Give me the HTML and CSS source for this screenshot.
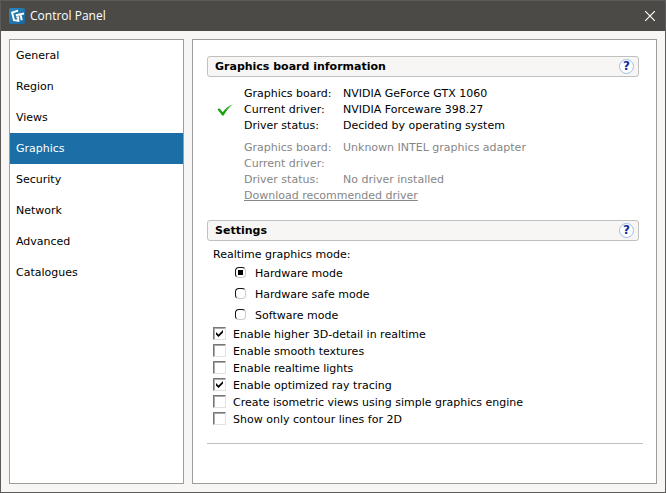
FILE: index.html
```html
<!DOCTYPE html>
<html lang="en">
<head>
    <meta charset="UTF-8">
    <meta name="viewport" content="width=device-width, initial-scale=1.0">
    <title>Control Panel</title>
    <link rel="stylesheet" href="styles.css">
</head>
<body>
    <div class="window">
        <header class="titlebar">
            <svg class="logo" viewBox="0 0 16 16" aria-hidden="true">
                <defs>
                    <linearGradient id="logo-bg" x1="0" y1="0" x2="1" y2="1">
                        <stop offset="0" stop-color="#2f86bd"/>
                        <stop offset="1" stop-color="#1566a0"/>
                    </linearGradient>
                </defs>
                <rect width="16" height="16" rx="2" fill="url(#logo-bg)"/>
                <path d="M9 2.6 3.1 4.6 5 12.2 9.4 12.9 9.2 9.2 7.4 9.4" fill="none" stroke="#fff" stroke-width="1.9"/>
                <path d="M6.8 7.2 15 5.4M11.4 6.2 12.8 12.2" fill="none" stroke="#fff" stroke-width="2"/>
            </svg>
            <h1>Control Panel</h1>
            <button type="button" class="close" aria-label="Close">
                <svg width="10" height="10" viewBox="0 0 10 10"><path d="M0 0 10 10M10 0 0 10" stroke="#fff" stroke-width="1.2"/></svg>
            </button>
        </header>
        <div class="content">
            <nav class="sidebar">
                <a href="#general">General</a>
                <a href="#region">Region</a>
                <a href="#views">Views</a>
                <a href="#graphics" class="active">Graphics</a>
                <a href="#security">Security</a>
                <a href="#network">Network</a>
                <a href="#advanced">Advanced</a>
                <a href="#catalogues">Catalogues</a>
            </nav>
            <main class="panel">
                <div class="section-header">
                    <h2>Graphics board information</h2>
                    <button type="button" class="help" aria-label="Help">?</button>
                </div>
                <div class="board">
                    <svg class="status" viewBox="0 0 16 13" aria-hidden="true">
                        <defs>
                            <linearGradient id="check" x1="0" y1="1" x2="1" y2="0">
                                <stop offset="0.4" stop-color="#17a00c"/>
                                <stop offset="1" stop-color="#6cc764"/>
                            </linearGradient>
                        </defs>
                        <path d="M0.3 5 2.6 4.4 5.8 8.2C8.4 4.2 11.6 1.4 15.8 0.4 12 3.4 9 7 6.6 11.6L5.2 11.6Z" fill="url(#check)"/>
                    </svg>
                    <table>
                        <tr><th>Graphics board:</th><td>NVIDIA GeForce GTX 1060</td></tr>
                        <tr><th>Current driver:</th><td>NVIDIA Forceware 398.27</td></tr>
                        <tr><th>Driver status:</th><td>Decided by operating system</td></tr>
                    </table>
                </div>
                <div class="board disabled">
                    <span class="status"></span>
                    <div>
                        <table>
                            <tr><th>Graphics board:</th><td>Unknown INTEL graphics adapter</td></tr>
                            <tr><th>Current driver:</th><td></td></tr>
                            <tr><th>Driver status:</th><td>No driver installed</td></tr>
                        </table>
                        <a href="#download">Download recommended driver</a>
                    </div>
                </div>
                <div class="section-header">
                    <h2>Settings</h2>
                    <button type="button" class="help" aria-label="Help">?</button>
                </div>
                <form class="settings">
                    <fieldset class="modes">
                        <legend>Realtime graphics mode:</legend>
                        <label><input type="radio" name="mode" checked>Hardware mode</label>
                        <label><input type="radio" name="mode">Hardware safe mode</label>
                        <label><input type="radio" name="mode">Software mode</label>
                    </fieldset>
                    <label><input type="checkbox" checked>Enable higher 3D-detail in realtime</label>
                    <label><input type="checkbox">Enable smooth textures</label>
                    <label><input type="checkbox">Enable realtime lights</label>
                    <label><input type="checkbox" checked>Enable optimized ray tracing</label>
                    <label><input type="checkbox">Create isometric views using simple graphics engine</label>
                    <label><input type="checkbox">Show only contour lines for 2D</label>
                </form>
                <hr>
            </main>
        </div>
    </div>
</body>
</html>
```

FILE: styles.css
```css
* {
    box-sizing: border-box;
}
body {
    margin: 0;
    font-family: Verdana, "DejaVu Sans", sans-serif;
    font-size: 11px;
    line-height: 16px;
    color: #000;
}
.window {
    display: flex;
    flex-direction: column;
    min-height: 100vh;
    background: #f7f6f4;
    border: 1px solid #5c5b59;
}
.titlebar {
    display: flex;
    align-items: center;
    gap: 5px;
    height: 30px;
    padding: 0 10px 0 8px;
    background: #4b4a47;
    color: #fff;
}
.logo {
    width: 16px;
    height: 16px;
}
.titlebar h1 {
    flex: 1;
    margin: 0;
    font-family: "Segoe UI", "Open Sans", sans-serif;
    font-size: 12px;
    font-weight: normal;
}
.close {
    display: flex;
    padding: 0;
    border: none;
    background: none;
    cursor: pointer;
}
.content {
    display: flex;
    flex: 1;
    gap: 8px;
    padding: 8px;
}
.sidebar {
    flex: 0 0 175px;
    background: #fff;
    border: 1px solid #9d9d9b;
}
.sidebar a {
    display: block;
    padding: 8px 6px 7px;
    color: #000;
    text-decoration: none;
}
.sidebar a.active {
    background: #1b6fa6;
    color: #fff;
}
.panel {
    flex: 1;
    padding: 16px 13px 16px 14px;
    background: #fff;
    border: 1px solid #9d9d9b;
}
.section-header {
    display: flex;
    align-items: center;
    justify-content: space-between;
    height: 21px;
    margin-right: 4px;
    padding: 0 4px 0 7px;
    background: #f7f6f4;
    border: 1px solid #c0c0c0;
    border-radius: 3px;
}
.section-header h2 {
    margin: 0;
    padding-top: 1px;
    font-size: 11px;
}
.help {
    width: 15px;
    height: 15px;
    padding: 0;
    background: #fff;
    border: 1px solid #9dbfdf;
    border-radius: 50%;
    font-family: inherit;
    font-size: 12px;
    font-weight: bold;
    line-height: 13px;
    color: #0a2f96;
    cursor: pointer;
}
.board {
    display: flex;
    align-items: center;
    gap: 11px;
    margin: 9px 0 6px 10px;
}
.board .status {
    width: 16px;
    height: 13px;
}
.board table {
    border-collapse: collapse;
}
.board th {
    width: 99px;
    padding: 0;
    font-weight: normal;
    text-align: left;
}
.board td {
    padding: 0;
}
.disabled {
    margin: 0 0 16px 10px;
    color: #868686;
}
.disabled a {
    display: block;
    color: #868686;
}
.settings {
    padding: 6px 0 0 6px;
}
.settings label {
    display: flex;
    align-items: center;
    gap: 7px;
    height: 17px;
}
.modes {
    margin: 0;
    padding: 0;
    border: none;
}
.modes legend {
    padding: 0;
}
.modes label {
    gap: 9px;
    height: 21px;
    padding-left: 22px;
}
input {
    appearance: none;
    margin: 0 0 2px;
    background: #fff;
}
input[type="checkbox"] {
    width: 13px;
    height: 13px;
    border: 1px solid;
    border-color: #777 #e2e2e2 #e2e2e2 #777;
    box-shadow: inset 1px 1px #aaa;
}
input[type="checkbox"]:checked {
    background: #fff url("data:image/svg+xml,%3Csvg xmlns='http://www.w3.org/2000/svg' viewBox='0 0 11 11'%3E%3Cpath d='M2 4 4.5 6.5 9 2V4.5L4.5 9 2 6.5Z'/%3E%3C/svg%3E");
}
input[type="radio"] {
    width: 11px;
    height: 11px;
    border: 1px solid;
    border-color: #111 #ccc #ccc #111;
    border-radius: 4px;
}
input[type="radio"]:checked {
    background: linear-gradient(#000, #000) center / 5px 5px no-repeat;
}
hr {
    height: 1px;
    margin: 15px 0 0;
    border: none;
    background: #c0c0c0;
}
```
